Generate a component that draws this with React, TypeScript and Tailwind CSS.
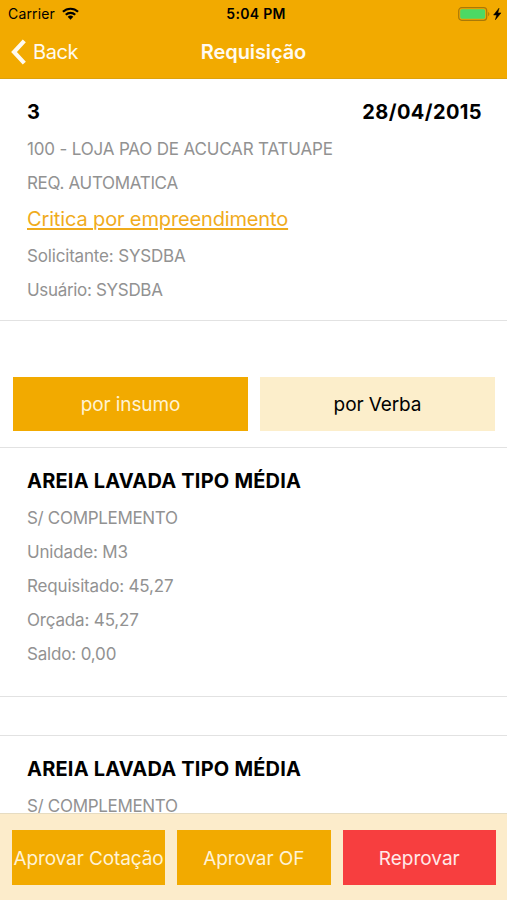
import type { ReactNode } from 'react';

function Line({ children, tight = false }: { children: ReactNode; tight?: boolean }) {
  return (
    <p
      className={`h-[34px] text-[17px] leading-[36px] whitespace-nowrap text-[#929292] ${
        tight ? 'tracking-[-0.32px]' : 'tracking-[-0.17px]'
      }`}
    >
      {children}
    </p>
  );
}

function ItemTitle({ children }: { children: ReactNode }) {
  return (
    <h2 className="h-[38px] text-[20px] leading-[38px] font-bold tracking-[0.2px] whitespace-nowrap">{children}</h2>
  );
}

function StatusBar() {
  return (
    <div className="grid h-[27px] grid-cols-3 items-center pr-[5px] pl-2 text-[14px]">
      <div className="flex items-center gap-[7px]">
        <span className="tracking-[0.15px]">Carrier</span>
        <svg width="17" height="13" viewBox="0 0 18 13" fill="none" stroke="#000" strokeWidth="2.3">
          <path d="M1 4.7a11.5 11.5 0 0 1 16 0M4 7.9a7.2 7.2 0 0 1 10 0" />
          <path d="M9 13L6 10a4.3 4.3 0 0 1 6 0z" fill="#000" stroke="none" />
        </svg>
      </div>
      <div className="pl-[2px] text-center font-semibold tracking-[0.3px]">5:04 PM</div>
      <div className="flex items-center justify-end">
        <svg width="44" height="14" viewBox="0 0 44 14">
          <rect x="0.7" y="0.7" width="28" height="12.6" rx="3" fill="none" stroke="#a97908" strokeWidth="1.2" />
          <rect x="2.2" y="2.3" width="25" height="9.4" rx="1.6" fill="#4cd964" />
          <path d="M30.2 4.7q2.4 2.3 0 4.6z" fill="#a97908" />
          <path d="M41 1.2l-5.4 6.8h3.1l-1.3 4.8 5.6-6.9h-3.2z" stroke="#000" strokeWidth="0.5" />
        </svg>
      </div>
    </div>
  );
}

export default function App() {
  return (
    <div className="flex h-[900px] w-[507px] flex-col overflow-hidden bg-white font-['Inter','Liberation_Sans',sans-serif] text-black">
      <header className="h-[79px] shrink-0 border-b border-[#dda20c] bg-[#f2aa00]">
        <StatusBar />
        <div className="grid h-[50px] grid-cols-3 items-center px-[11px] text-[#fffaf0]">
          <div className="flex items-center gap-[7px] text-[20px] tracking-[-0.4px]">
            <svg width="15" height="26" viewBox="0 0 15 26" fill="none" stroke="currentColor" strokeWidth="4.2">
              <path d="M13.3 1.8L3 13l10.3 11.2" />
            </svg>
            Back
          </div>
          <h1 className="text-center text-[20px] font-semibold tracking-[-0.1px]">Requisição</h1>
        </div>
      </header>

      <main className="min-h-0 flex-1 overflow-hidden">
        <section className="h-[242px] border-b border-[#e2e2e2] px-[27px] pt-[14px]">
          <div className="flex h-[38px] items-center justify-between text-[20px] font-bold">
            <span>3</span>
            <span className="-mr-[2px] tracking-[0.4px]">28/04/2015</span>
          </div>
          <Line>100 - LOJA PAO DE ACUCAR TATUAPE</Line>
          <Line tight>REQ. AUTOMATICA</Line>
          <p className="h-[39px] text-[20px] leading-[41px] tracking-[-0.14px] whitespace-nowrap text-[#f0ab1c] underline decoration-[1.5px] underline-offset-[2px]">
            Critica por empreendimento
          </p>
          <Line>Solicitante: SYSDBA</Line>
          <Line tight>Usuário: SYSDBA</Line>
        </section>

        <div className="flex h-[127px] gap-[12px] border-b border-[#e2e2e2] pt-[56px] pr-[12px] pl-[13px] text-[19px]">
          <button className="h-[54px] w-[235px] bg-[#f2aa00] pt-[3px] tracking-[-0.1px] text-[#fff3d3]">por insumo</button>
          <button className="h-[54px] w-[235px] bg-[#fceecb] pt-[3px] tracking-[-0.1px]">por Verba</button>
        </div>

        <section className="h-[249px] border-b border-[#e2e2e2] px-[27px] pt-[14px]">
          <ItemTitle>AREIA LAVADA TIPO MÉDIA</ItemTitle>
          <Line tight>S/ COMPLEMENTO</Line>
          <Line>Unidade: M3</Line>
          <Line>Requisitado: 45,27</Line>
          <Line>Orçada: 45,27</Line>
          <Line>Saldo: 0,00</Line>
        </section>

        <div className="h-[39px] border-b border-[#e2e2e2]" />

        <section className="px-[27px] pt-[14px]">
          <ItemTitle>AREIA LAVADA TIPO MÉDIA</ItemTitle>
          <Line tight>S/ COMPLEMENTO</Line>
        </section>
      </main>

      <footer className="flex h-[87px] shrink-0 gap-[12px] border-t border-[#e6dcc2] bg-[#fceccb] pt-[16px] pr-[11px] pl-[12px] text-[19px] text-[#fff3d6]">
        <button className="h-[55px] w-[153px] bg-[#f2aa00] pt-[3px] tracking-[-0.1px] whitespace-nowrap">Aprovar Cotação</button>
        <button className="h-[55px] w-[153.5px] bg-[#f2aa00] pt-[3px] tracking-[-0.1px] whitespace-nowrap">Aprovar OF</button>
        <button className="h-[55px] w-[153.5px] bg-[#f73e3f] pt-[3px] whitespace-nowrap text-[#ffe9e9]">Reprovar</button>
      </footer>
    </div>
  );
}
